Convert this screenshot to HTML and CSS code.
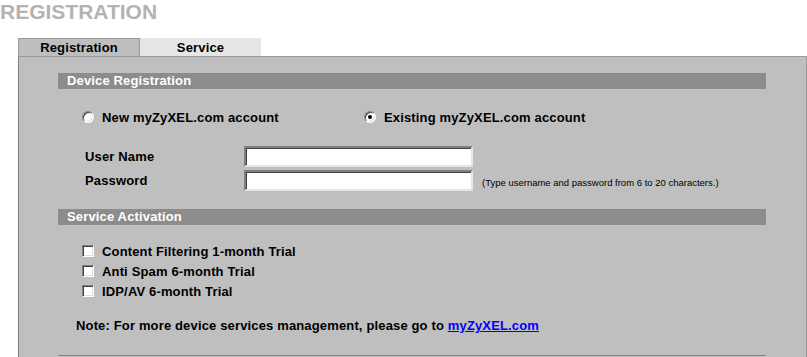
FILE: index.html
```html
<!DOCTYPE html>
<html lang="en">
<head>
    <meta charset="UTF-8">
    <title>Registration</title>
    <link rel="stylesheet" href="styles.css">
</head>
<body>
    <h1 class="page-title">REGISTRATION</h1>

    <div class="tabs">
        <div class="tab active">Registration</div>
        <div class="tab">Service</div>
    </div>

    <div class="panel">
        <div class="section-bar">Device Registration</div>

        <div class="radio-row">
            <label class="radio-item">
                <input type="radio" name="account" class="radio">
                New myZyXEL.com account
            </label>
            <label class="radio-item">
                <input type="radio" name="account" class="radio" checked>
                Existing myZyXEL.com account
            </label>
        </div>

        <div class="field-row">
            <label for="username" class="field-label">User Name</label>
            <input type="text" id="username" class="field-input">
        </div>
        <div class="field-row">
            <label for="password" class="field-label">Password</label>
            <input type="password" id="password" class="field-input">
            <span class="hint">(Type username and password from 6 to 20 characters.)</span>
        </div>

        <div class="section-bar second">Service Activation</div>

        <div class="check-list">
            <label class="check-item"><input type="checkbox" class="check"> Content Filtering 1-month Trial</label>
            <label class="check-item"><input type="checkbox" class="check"> Anti Spam 6-month Trial</label>
            <label class="check-item"><input type="checkbox" class="check"> IDP/AV 6-month Trial</label>
        </div>

        <p class="note">Note: For more device services management, please go to <a href="#">myZyXEL.com</a></p>

        <div class="divider"></div>
    </div>
</body>
</html>
```

FILE: styles.css
```css
/* Reset */
* {
    margin: 0;
    padding: 0;
    box-sizing: border-box;
}

body {
    font-family: "Liberation Sans", Arial, sans-serif;
    font-size: 13px;
    font-weight: bold;
    letter-spacing: 0.15px;
    color: #000;
    background-color: #fff;
    overflow: hidden;
}

/* Page title */
.page-title {
    font-size: 21px;
    line-height: 24px;
    letter-spacing: 0;
    color: #b3b3b3;
    height: 38px;
}

/* Tabs */
.tabs {
    display: flex;
    margin-left: 18px;
    height: 18px;
}

.tab {
    width: 121px;
    text-align: center;
    line-height: 17px;
    background-color: #e6e6e6;
    border-top: 1px solid #e6e6e6;
}

.tab.active {
    width: 122px;
    background-color: #bebebe;
    border: 1px solid #999;
    border-bottom: none;
}

/* Main panel */
.panel {
    margin-left: 18px;
    background-color: #bfbfbf;
    border-top: 1px solid #999;
    border-left: 1px solid #808080;
    border-right: 1px solid #999;
    padding: 16px 40px 0 39px;
    height: 301px;
}

.section-bar {
    height: 16px;
    line-height: 16px;
    background-color: #8c8c8c;
    color: #fff;
    padding-left: 9px;
}

.section-bar.second {
    margin-top: 18px;
}

/* Radio buttons */
.radio-row {
    display: flex;
    height: 20px;
    margin-top: 18px;
    padding-left: 24px;
    align-items: center;
}

.radio-item {
    display: flex;
    align-items: center;
    width: 282px;
}

.radio {
    appearance: none;
    width: 12px;
    height: 12px;
    border-radius: 50%;
    background-color: #fff;
    border: 1px solid;
    border-color: #808080 #fff #fff #808080;
    box-shadow: inset 1px 1px 0 #404040, inset -1px -1px 0 #dfdfdf;
    margin-right: 8px;
    position: relative;
}

.radio:checked::after {
    content: "";
    position: absolute;
    left: 3px;
    top: 3px;
    width: 4px;
    height: 4px;
    border-radius: 50%;
    background-color: #000;
}

/* Text fields */
.field-row {
    display: flex;
    align-items: center;
    padding-left: 27px;
    height: 21px;
    margin-top: 3px;
}

.radio-row + .field-row {
    margin-top: 19px;
}

.field-label {
    width: 159px;
}

.field-input {
    width: 229px;
    height: 21px;
    border: 2px solid;
    border-color: #808080 #e6e6e6 #e6e6e6 #808080;
    box-shadow: inset 1px 1px 0 #404040;
    background-color: #fff;
}

.hint {
    font-size: 9.5px;
    font-weight: normal;
    letter-spacing: 0;
    margin-left: 9px;
    margin-top: 3px;
}

/* Checkboxes */
.check-list {
    margin-top: 16px;
    padding-left: 24px;
}

.check-item {
    display: flex;
    align-items: center;
    height: 20px;
}

.check {
    appearance: none;
    width: 12px;
    height: 12px;
    background-color: #fff;
    border: 1px solid;
    border-color: #808080 #fff #fff #808080;
    box-shadow: inset 1px 1px 0 #404040, inset -1px -1px 0 #dfdfdf;
    margin-right: 8px;
}

/* Note */
.note {
    margin-top: 15px;
    padding-left: 18px;
    line-height: 20px;
}

.note a {
    color: #00f;
}

.divider {
    margin-top: 19px;
    border-top: 1px solid #808080;
}
```
